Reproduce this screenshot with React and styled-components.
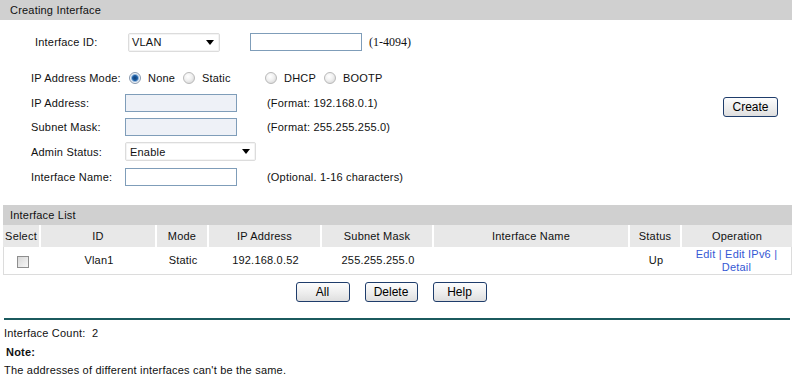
import React from "react";
import styled, { createGlobalStyle } from "styled-components";

const Global = createGlobalStyle`
  html, body { margin: 0; padding: 0; background: #fff; }
  body { font-family: "Liberation Sans", Arial, sans-serif; font-size: 11px; color: #111; letter-spacing: 0.2px; }
  * { box-sizing: border-box; }
`;

const Page = styled.div`
  width: 792px;
`;

const SectionBar = styled.div`
  height: 20px;
  line-height: 21px;
  background: #d0d0d0;
  padding-left: ${(p) => p.$pad || 10}px;
  margin-left: ${(p) => p.$indent || 0}px;
  margin-top: ${(p) => p.$top || 0}px;
  width: ${(p) => 792 - (p.$indent || 0)}px;
  font-size: 11px;
  color: #111;
`;

const FormArea = styled.div`
  display: flex;
  justify-content: space-between;
`;

const FormRows = styled.div`
  display: flex;
  flex-direction: column;
`;

const Row = styled.div`
  display: flex;
  align-items: center;
  height: ${(p) => p.$h || 25}px;
  padding-left: ${(p) => p.$left || 31}px;
  margin-top: ${(p) => p.$top || 0}px;
`;

const Label = styled.span`
  width: ${(p) => p.$w || 94}px;
  flex: none;
  white-space: nowrap;
`;

const FakeSelect = styled.div`
  width: ${(p) => p.$w}px;
  height: 19px;
  border: 1px solid #dcdcdc;
  border-radius: 2px;
  display: flex;
  align-items: center;
  justify-content: space-between;
  padding: 0 5px 0 ${(p) => p.$pl || 3}px;
  background: #fff;
  color: #111;
  font-size: 11px;
  box-shadow: inset 0 0 0 1px #f4f4f4;
`;

const Arrow = styled.span`
  width: 0;
  height: 0;
  border-left: 4px solid transparent;
  border-right: 4px solid transparent;
  border-top: 5px solid #000;
`;

const TextInput = styled.input`
  width: ${(p) => p.$w || 112}px;
  height: 18px;
  border: 1px solid #7f9db9;
  background: ${(p) => (p.disabled ? "#eef1f7" : "#fff")};
  margin: 0 0 0 ${(p) => p.$ml || 0}px;
  padding: 0 2px;
  font: inherit;
  outline: none;
`;

const Hint = styled.span`
  margin-left: ${(p) => p.$ml}px;
  white-space: nowrap;
  font-family: ${(p) => (p.$serif ? '"Liberation Serif", "Times New Roman", serif' : "inherit")};
  font-size: ${(p) => (p.$serif ? 12 : 11)}px;
  letter-spacing: ${(p) => (p.$serif ? 0 : 0.2)}px;
`;

const RadioGroup = styled.label`
  display: flex;
  align-items: center;
  width: ${(p) => p.$w}px;
  flex: none;
  white-space: nowrap;
`;

const Radio = styled.input.attrs({ type: "radio" })`
  appearance: none;
  width: 12px;
  height: 12px;
  margin: 0 7px 0 4px;
  border-radius: 50%;
  border: 1px solid #b9b9b9;
  background: radial-gradient(circle at 40% 35%, #ffffff 0%, #f0f0f0 45%, #cfcfcf 100%);
  &:checked {
    border-color: #8a9bb0;
    background: radial-gradient(circle at 50% 50%, #0f3d73 0, #1d5fa6 2.5px, #8fb4da 3.5px, #f2f4f7 4.5px, #d9dde3 100%);
  }
`;

const CreateCol = styled.div`
  padding-top: 77px;
  padding-right: 14px;
`;

const Btn = styled.button`
  width: ${(p) => p.$w || 54}px;
  height: 20px;
  border: 1px solid #1f3d6b;
  border-radius: 3px;
  background: linear-gradient(#fdfdfd, #ececec 60%, #dedede);
  font-family: "Liberation Sans", Arial, sans-serif;
  font-size: 12px;
  color: #000;
  padding: 0;
  line-height: 18px;
`;

const Table = styled.div`
  margin-left: 3px;
  width: 789px;
  display: grid;
  grid-template-columns: 38px 116px 52px 113px 112px 196px 52px 110px;
`;

const Th = styled.div`
  height: 22px;
  background: #e8e8e8;
  display: flex;
  align-items: center;
  justify-content: center;
  border-right: ${(p) => (p.$last ? "none" : "2px solid #fff")};
  white-space: nowrap;
`;

const Td = styled.div`
  height: 28px;
  display: flex;
  flex-direction: column;
  align-items: center;
  justify-content: center;
  border-bottom: 1px solid #dcdcdc;
  border-left: ${(p) => (p.$first ? "1px solid #dcdcdc" : "none")};
  border-right: ${(p) => (p.$last ? "1px solid #dcdcdc" : "none")};
  text-align: center;
  line-height: 13px;
`;

const Check = styled.input.attrs({ type: "checkbox" })`
  appearance: none;
  width: 12px;
  height: 12px;
  margin: 2px 0 0 0;
  border: 1px solid #8e8e8e;
  background: linear-gradient(135deg, #d8d8d8, #f7f7f7);
`;

const Link = styled.a`
  color: #3458d4;
  text-decoration: none;
`;

const ButtonRow = styled.div`
  display: flex;
  justify-content: center;
  gap: 15px;
  margin-top: 7px;
  padding-right: 10px;
`;

const Rule = styled.div`
  margin: 16px 0 0 4px;
  width: 786px;
  height: 2px;
  background: #1b5a5e;
`;

const InfoLine = styled.div`
  height: 14px;
  line-height: 14px;
  margin-top: ${(p) => p.$top}px;
  padding-left: ${(p) => p.$left || 4}px;
  font-weight: ${(p) => (p.$bold ? 700 : 400)};
  white-space: pre;
`;

const cols = ["Select", "ID", "Mode", "IP Address", "Subnet Mask", "Interface Name", "Status", "Operation"];

export default function App() {
  return (
    <Page>
      <Global />
      <SectionBar>Creating Interface</SectionBar>
      <FormArea>
        <FormRows>
          <Row $h={20} $top={12} $left={35}>
            <Label $w={93}>Interface ID:</Label>
            <FakeSelect $w={92}>
              <span>VLAN</span>
              <Arrow />
            </FakeSelect>
            <TextInput $ml={30} $w={112} />
            <Hint $ml={7} $serif>(1-4094)</Hint>
          </Row>
          <Row $top={13}>
            <Label>IP Address Mode:</Label>
            <RadioGroup $w={54}>
              <Radio name="mode" defaultChecked />
              None
            </RadioGroup>
            <RadioGroup $w={82}>
              <Radio name="mode" />
              Static
            </RadioGroup>
            <RadioGroup $w={59}>
              <Radio name="mode" />
              DHCP
            </RadioGroup>
            <RadioGroup $w={70}>
              <Radio name="mode" />
              BOOTP
            </RadioGroup>
          </Row>
          <Row>
            <Label>IP Address:</Label>
            <TextInput disabled />
            <Hint $ml={30}>(Format: 192.168.0.1)</Hint>
          </Row>
          <Row $h={24}>
            <Label>Subnet Mask:</Label>
            <TextInput disabled />
            <Hint $ml={30}>(Format: 255.255.255.0)</Hint>
          </Row>
          <Row>
            <Label>Admin Status:</Label>
            <FakeSelect $w={131} $pl={4}>
              <span>Enable</span>
              <Arrow />
            </FakeSelect>
          </Row>
          <Row>
            <Label>Interface Name:</Label>
            <TextInput />
            <Hint $ml={30}>(Optional. 1-16 characters)</Hint>
          </Row>
        </FormRows>
        <CreateCol>
          <Btn $w={55}>Create</Btn>
        </CreateCol>
      </FormArea>

      <SectionBar $indent={3} $pad={7} $top={16}>Interface List</SectionBar>
      <Table>
        {cols.map((c, i) => (
          <Th key={c} $last={i === cols.length - 1}>{c}</Th>
        ))}
        <Td $first><Check /></Td>
        <Td>Vlan1</Td>
        <Td>Static</Td>
        <Td>192.168.0.52</Td>
        <Td>255.255.255.0</Td>
        <Td></Td>
        <Td>Up</Td>
        <Td $last>
          <span>
            <Link href="#">Edit</Link> <Link as="span">|</Link> <Link href="#">Edit IPv6</Link> <Link as="span">|</Link>
          </span>
          <Link href="#">Detail</Link>
        </Td>
      </Table>
      <ButtonRow>
        <Btn>All</Btn>
        <Btn $w={53}>Delete</Btn>
        <Btn>Help</Btn>
      </ButtonRow>
      <Rule />
      <InfoLine $top={6}>{"Interface Count:  2"}</InfoLine>
      <InfoLine $top={5} $left={6} $bold>Note:</InfoLine>
      <InfoLine $top={4}>The addresses of different interfaces can't be the same.</InfoLine>
    </Page>
  );
}
